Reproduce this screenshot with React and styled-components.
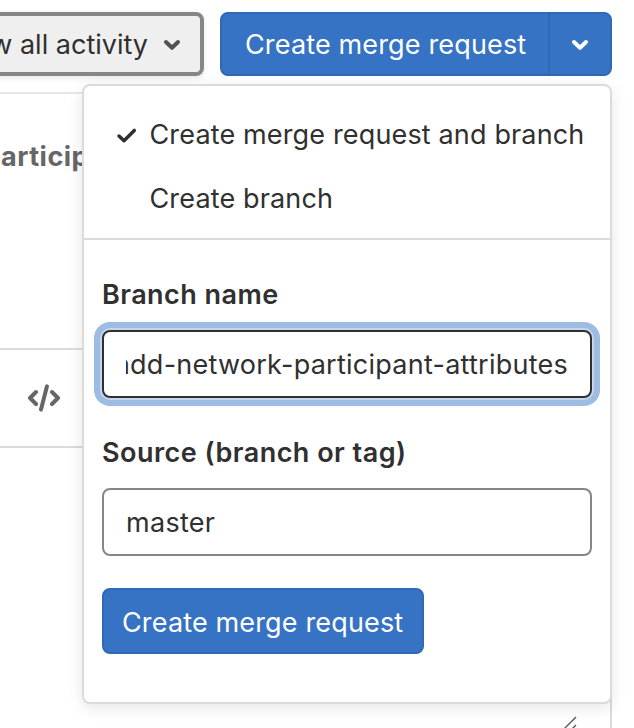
import React from "react";
import styled, { createGlobalStyle } from "styled-components";

const GlobalStyle = createGlobalStyle`
  *, *::before, *::after { box-sizing: border-box; }
  html, body { margin: 0; background: #fff; overflow: hidden; }
  body, button, input { font-family: Inter, "Liberation Sans", sans-serif; }
`;

const Page = styled.main`
  position: relative;
  width: 634px;
  height: 728px;
  overflow: hidden;
  color: #303030;
  font-size: 27px;
  line-height: 32px;
`;

const ActionBar = styled.header`
  display: flex;
  gap: 16px;
  width: 612px;
  height: 92px;
  padding-top: 12px;
  justify-content: flex-end;
`;

const FilterButton = styled.button`
  display: flex;
  flex: none;
  align-items: center;
  justify-content: flex-end;
  gap: 8px;
  width: 300px;
  height: 64px;
  padding: 0 12px 0 0;
  border: 4px solid #868686;
  border-radius: 8px;
  background: #efefef;
  box-shadow: 0 2px 6px rgba(0, 0, 0, 0.1);
  color: #303030;
  font-size: 27px;
  letter-spacing: ${(p) => p.$tracking};
  white-space: nowrap;

  svg { color: #535353; }
`;

const SplitButton = styled.div`
  display: flex;
  flex: none;
  width: 392px;
  height: 64px;
  border: 2px solid #2f68b4;
  border-radius: 8px;
  background: #3673c5;
  color: #fff;
`;

const SplitMain = styled.button`
  flex: none;
  width: 326px;
  padding: 0 0 0 23px;
  border: 0;
  background: none;
  color: inherit;
  font-size: 27px;
  letter-spacing: ${(p) => p.$tracking};
  text-align: left;
  white-space: nowrap;
`;

const SplitToggle = styled.button`
  display: flex;
  flex: 1;
  align-items: center;
  justify-content: center;
  padding: 0;
  border: 0;
  border-left: 2px solid #2f68b4;
  background: none;
  color: inherit;
`;

const Participants = styled.section`
  width: 612px;
  height: 256px;
  padding-top: 46px;
  border-top: 2px solid #e7e7e7;
`;

const ParticipantsTitle = styled.h2`
  margin: 0 0 0 1px;
  color: #666;
  font-size: 27px;
  font-weight: 700;
  line-height: 34px;
  letter-spacing: 0.5px;
`;

const Editor = styled.section`
  width: 612px;
  height: 400px;
  border: 2px solid #dbdbdb;
  border-left: 0;
`;

const EditorToolbar = styled.div`
  display: flex;
  align-items: center;
  height: 98px;
  padding-left: 28px;
  border-bottom: 2px solid #dbdbdb;
  color: #666;
`;

const EditorBody = styled.div`
  display: flex;
  justify-content: flex-end;
  padding: 268px 33px 0 0;
`;

const Menu = styled.div`
  position: absolute;
  top: 84px;
  left: 82px;
  width: 530px;
  height: 620px;
  border: 2px solid #dbdbdb;
  border-radius: 8px;
  background: #fff;
  box-shadow: 0 4px 16px rgba(0, 0, 0, 0.1);
`;

const Options = styled.ul`
  height: 154px;
  margin: 0;
  padding: 17px 0 0;
  border-bottom: 2px solid #dbdbdb;
  list-style: none;
`;

const Option = styled.li`
  display: flex;
  align-items: center;
  height: 64px;
  padding-left: 32px;
  letter-spacing: ${(p) => p.$tracking};
  white-space: nowrap;
`;

const CheckSlot = styled.span`
  display: flex;
  flex: none;
  width: 33.5px;
`;

const Form = styled.form`
  display: flex;
  flex-direction: column;
  align-items: flex-start;
  padding: 37px 18px 0;
`;

const Label = styled.label`
  margin-bottom: 17px;
  font-weight: 600;
  line-height: 36px;
  letter-spacing: ${(p) => p.$tracking};
`;

const Field = styled.div`
  display: flex;
  align-items: center;
  width: 490px;
  height: 68px;
  padding: 2px 22px 0;
  border: 2px solid ${(p) => (p.$focused ? "#303030" : "#868686")};
  border-radius: 8px;
  background: #fff;
  box-shadow: ${(p) => (p.$focused ? "0 0 0 2px #c5d5ec, 0 0 0 8px #9dbce4" : "none")};
`;

const FieldText = styled.div`
  display: flex;
  width: 442px;
  overflow: hidden;
  justify-content: ${(p) => (p.$scrolled ? "flex-end" : "flex-start")};
  letter-spacing: ${(p) => p.$tracking};
  white-space: nowrap;
`;

const SourceLabel = styled(Label)`
  margin-top: 37px;
`;

const SubmitButton = styled.button`
  width: 322px;
  height: 66px;
  margin-top: 32px;
  padding: 2px 0 0 18px;
  border: 2px solid #2f68b4;
  border-radius: 8px;
  background: #3673c5;
  color: #fff;
  font-size: 27px;
  letter-spacing: ${(p) => p.$tracking};
  text-align: left;
  white-space: nowrap;
`;

const ChevronIcon = () => (
  <svg width="32" height="32" viewBox="0 0 32 32" fill="none" stroke="currentColor" strokeWidth="4" strokeLinecap="round" strokeLinejoin="round">
    <path d="m10 14 6 5.8 6-5.8" />
  </svg>
);

const CheckIcon = () => (
  <svg width="22" height="18" viewBox="0 0 22 18" fill="none" stroke="currentColor" strokeWidth="3.5" strokeLinecap="round" strokeLinejoin="round">
    <path d="M3 10 8 14.7 18.3 4.4" />
  </svg>
);

const CodeIcon = () => (
  <svg width="32" height="28" viewBox="0 0 32 28" fill="none" stroke="currentColor" strokeWidth="4" strokeLinecap="round" strokeLinejoin="round">
    <path d="M8 8 2 14l6 6M24 8l6 6-6 6M18.9 2.4 13 25.6" />
  </svg>
);

const ResizeGrip = () => (
  <svg width="14" height="14" viewBox="0 0 14 14" fill="none" stroke="#555" strokeWidth="1.4">
    <path d="M.5 13.5 13 1M8.5 13.5 13 9" />
  </svg>
);

export default function App() {
  return (
    <>
      <GlobalStyle />
      <Page>
        <ActionBar>
          <FilterButton $tracking="0px">
            Show all activity
            <ChevronIcon />
          </FilterButton>
          <SplitButton>
            <SplitMain $tracking="0.15px">Create merge request</SplitMain>
            <SplitToggle aria-label="Toggle menu">
              <ChevronIcon />
            </SplitToggle>
          </SplitButton>
        </ActionBar>
        <Participants>
          <ParticipantsTitle>articipants</ParticipantsTitle>
        </Participants>
        <Editor>
          <EditorToolbar>
            <CodeIcon />
          </EditorToolbar>
          <EditorBody>
            <ResizeGrip />
          </EditorBody>
        </Editor>
        <Menu>
          <Options>
            <Option $tracking="0.15px">
              <CheckSlot>
                <CheckIcon />
              </CheckSlot>
              Create merge request and branch
            </Option>
            <Option $tracking="0.15px">
              <CheckSlot />
              Create branch
            </Option>
          </Options>
          <Form>
            <Label $tracking="0.45px">Branch name</Label>
            <Field $focused>
              <FieldText $scrolled $tracking="0.25px">add-network-participant-attributes</FieldText>
            </Field>
            <SourceLabel $tracking="0.48px">Source (branch or tag)</SourceLabel>
            <Field>
              <FieldText $tracking="0.3px">master</FieldText>
            </Field>
            <SubmitButton type="button" $tracking="0.15px">Create merge request</SubmitButton>
          </Form>
        </Menu>
      </Page>
    </>
  );
}
